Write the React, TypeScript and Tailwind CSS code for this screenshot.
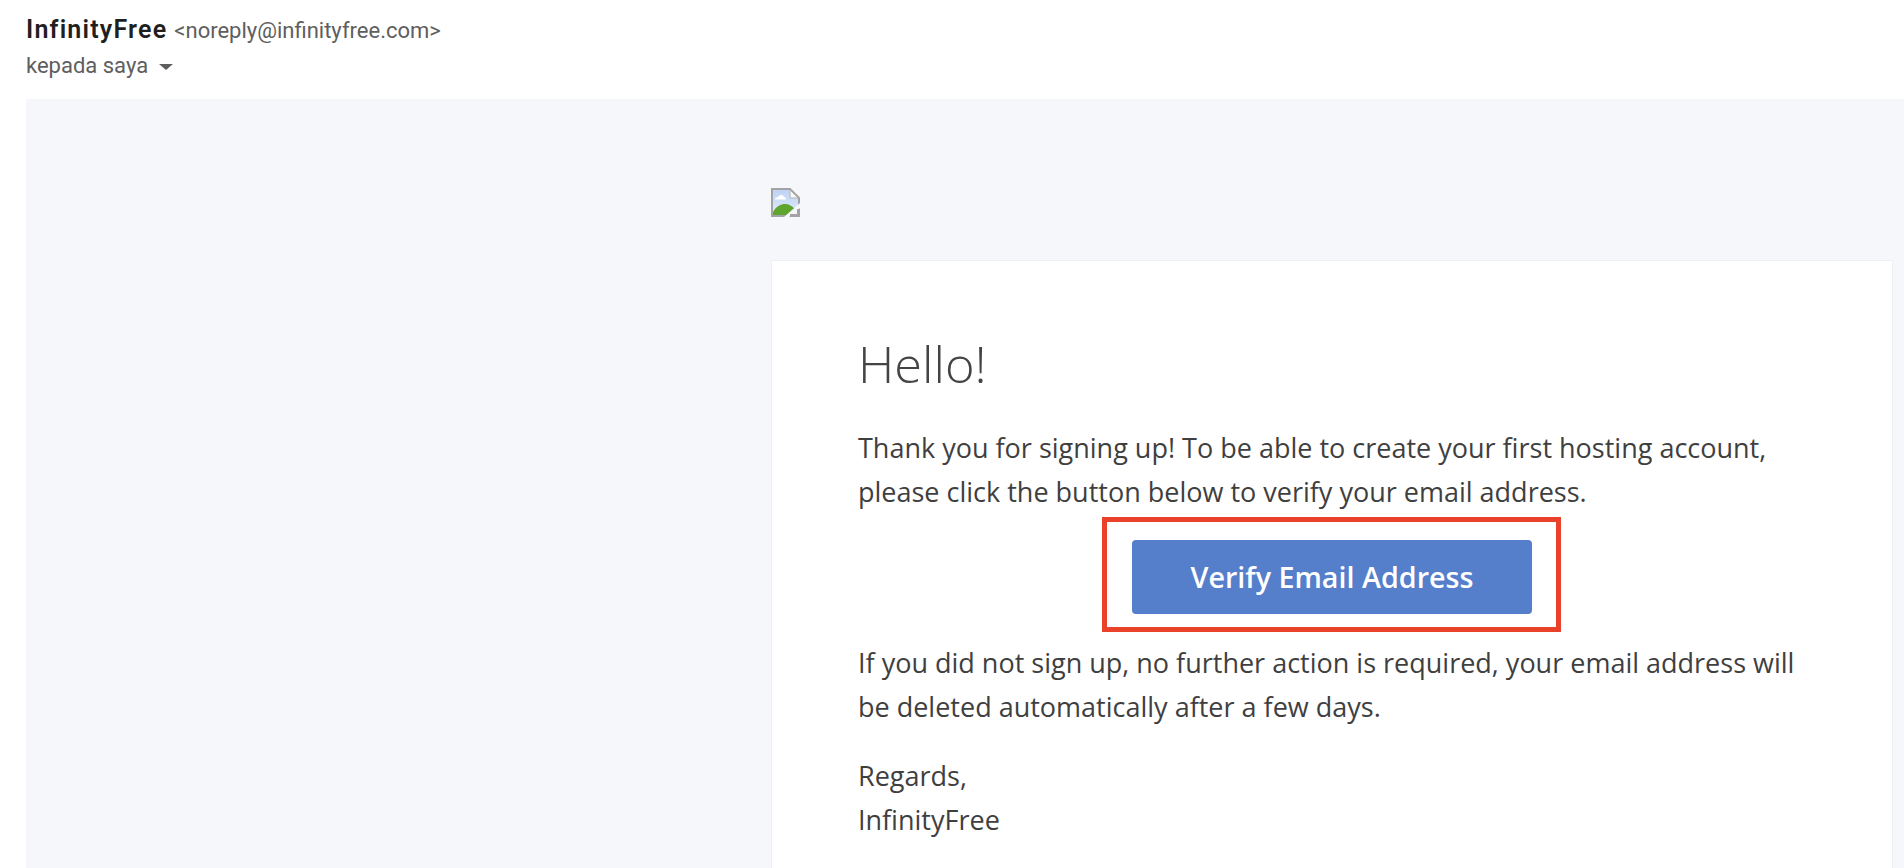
function BrokenImage() {
  return (
    <svg width="29" height="29" viewBox="0 0 29 29" className="block">
      <defs>
        <linearGradient id="sky" x1="0" y1="0" x2="0" y2="1">
          <stop offset="0" stopColor="#bcd2f5" />
          <stop offset="1" stopColor="#e3ecfb" />
        </linearGradient>
      </defs>
      <path d="M1 1H19L28 10V28H1Z" fill="url(#sky)" stroke="#a3a3a3" strokeWidth="2" />
      <path d="M19 2V10H27Z" fill="#f6f7fb" stroke="#b5b5b5" strokeWidth="1" />
      <path d="M4 11.5C4 9.5 6 9 7 9.500C7.500 6.500 12 6 13 9C14.500 9 15 10.500 15 11.500Z" fill="#ffffff" />
      <path d="M2 27V24C5 18 11 15.500 15 16C19 16.500 23 19 25 23L22 27Z" fill="#5ea52f" />
      <path d="M29 15L13 29H18L29 20Z" fill="#f5f7fb" />
      <path d="M19 27H27V21" fill="none" stroke="#a3a3a3" strokeWidth="2" />
      <path d="M19.500 26L26 20.500V26Z" fill="#f5f7fb" />
    </svg>
  );
}

export default function App() {
  return (
    <main className="h-[868px] overflow-hidden bg-white pl-[26px] font-['Open_Sans',sans-serif]">
      <header className="h-[99px] pt-[15px] font-['Roboto',sans-serif]">
        <div className="flex items-baseline gap-[7px] leading-[30px]">
          <span className="text-[25px] font-semibold tracking-[1.2px] text-[#1f1f1f]">InfinityFree</span>
          <span className="text-[22px] text-[#5e5e5e]">&lt;noreply@infinityfree.com&gt;</span>
        </div>
        <div className="mt-[7px] flex items-center gap-[11px] text-[22px] leading-[26px] text-[#5e5e5e]">
          <span>kepada saya</span>
          <span className="mt-[2px] h-0 w-0 border-x-[7px] border-t-[6px] border-x-transparent border-t-[#5e5e5e]" />
        </div>
      </header>

      <div className="h-[769px] bg-[#f5f7fb] pl-[745px] pr-[11px] pt-[89px]">
        <BrokenImage />
        <section className="mt-[43px] h-[700px] rounded-[2px] border border-[#edeff5] bg-white pl-[86px] pr-[70px] pt-[67px] text-[27px] leading-[43.5px] text-[#3f3f3f]">
          <h1 className="text-[50.5px] font-light leading-[72px] text-[#444444]">Hello!</h1>
          <p className="mt-[26px]">
            Thank you for signing up! To be able to create your first hosting account,
            <br />
            please click the button below to verify your email address.
          </p>
          <div className="mt-[4px] ml-[244px] w-[459px] border-[5px] border-[#e9412a] pl-[25px] pr-[24px] pb-[13px] pt-[18px]">
            <a className="flex h-[74px] items-center justify-center rounded-[4px] bg-[#557ecb] text-[28.7px] font-semibold text-white">
              Verify Email Address
            </a>
          </div>
          <p className="mt-[9px]">
            If you did not sign up, no further action is required, your email address will
            <br />
            be deleted automatically after a few days.
          </p>
          <p className="mt-[26px]">
            Regards,
            <br />
            InfinityFree
          </p>
        </section>
      </div>
    </main>
  );
}
